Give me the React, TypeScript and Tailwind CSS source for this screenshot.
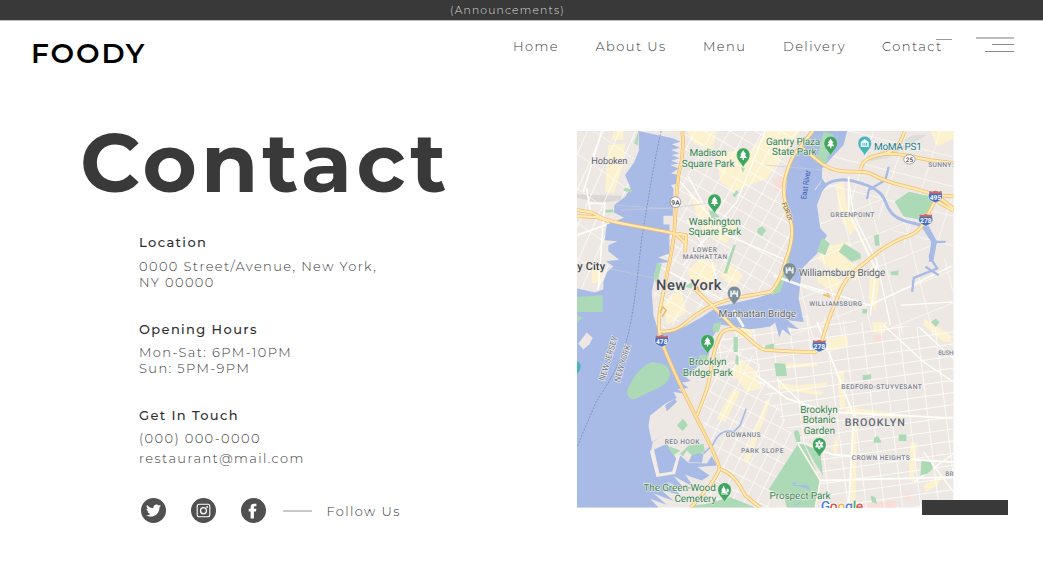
import React from 'react';
import { FaTwitter } from 'react-icons/fa';

/* Parallel street lines through a point, spread along the normal. */
function grid(cx: number, cy: number, angle: number, gap: number, count: number, length: number) {
  const a = (angle * Math.PI) / 180;
  const dx = Math.cos(a) * length;
  const dy = Math.sin(a) * length;
  let d = '';
  for (let i = -count; i <= count; i++) {
    const x = cx - Math.sin(a) * gap * i;
    const y = cy + Math.cos(a) * gap * i;
    d += `M${(x - dx).toFixed(1)} ${(y - dy).toFixed(1)}L${(x + dx).toFixed(1)} ${(y + dy).toFixed(1)}`;
  }
  return d;
}

const highways = [
  'M336 18C342 60 338 100 325 150C318 210 316 270 312 325C306 380 292 440 282 490C272 540 262 580 268 625L275 650C300 720 340 800 378 875C405 930 440 990 448 1030C440 1060 400 1105 362 1146',
  'M21 255L65 262C85 275 110 288 150 294L315 325L348 330L345 382',
  'M21 273L80 276L115 288',
  'M315 325L350 358',
  'M270 618C300 622 330 610 350 590C390 555 430 535 480 522C530 512 560 507 600 500C625 480 640 430 648 400C660 370 668 330 664 300C655 260 640 230 640 190C645 140 665 90 690 65L728 18',
  'M375 492L420 535L490 606C530 625 555 668 585 674L660 678L735 681C755 665 760 620 780 570C805 510 815 470 850 440C900 400 940 360 1000 337C1050 325 1060 295 1075 262L1098 220',
  'M380 870C400 820 418 780 420 740C428 700 435 650 455 622C470 610 490 608 510 615',
  'M690 65C730 90 750 125 800 136C850 145 880 132 910 150C960 180 1010 180 1094 210L1149 214',
  'M870 133C880 95 910 95 945 85C1000 65 990 35 1005 18',
  'M945 87C1000 80 1030 105 1149 113',
  'M1094 225L1149 257M1110 220L1149 250',
  'M452 1032C490 1045 510 1080 525 1110L570 1146',
];

function Label({ x, y, w, s = 30, c = '#69707d', wt = 400, children, t, halo = '#f4f1ed' }: {
  x: number; y: number; w: number; s?: number; c?: string; wt?: number; children: string; t?: string; halo?: string;
}) {
  return (
    <text x={x} y={y} fontSize={s} fill={c} fontWeight={wt} textLength={w} lengthAdjust="spacing" transform={t}
      stroke={halo} strokeWidth={3.5} strokeLinejoin="round" paintOrder="stroke">
      {children}
    </text>
  );
}

function Pin({ x, y, c = '#3fa660', kind = 'tree' }: { x: number; y: number; c?: string; kind?: string }) {
  return (
    <g transform={`translate(${x} ${y})`}>
      <path d="M0 33C-4 20 -20 13 -20 -5A20 20 0 0 1 20 -5C20 13 4 20 0 33Z" fill={c} stroke="#fff" strokeOpacity=".55" strokeWidth="1.5" />
      {kind === 'tree' && <path d="M0 -18L9 -5H5L11 5H2V11H-2V5H-11L-5 -5H-9Z" fill="#fff" />}
      {kind === 'grove' && <path d="M-3 -16L5 -1H2L7 6H-11L-7 -1H-10ZM7 -7A5 5 0 0 1 10 3H8V8H11V10H-10V8H5V3Z" fill="#fff" />}
      {kind === 'bridge' && <path d="M-12 -12H-8C-7 -5 -5 -4 -4 -4V-12H0H4V-4C6 -4 8 -7 8 -12H12V7H6V1C3 -2 -3 -2 -6 1V7H-12Z" fill="#e8edf0" />}
      {kind === 'museum' && <path d="M-12 -8L0 -17L12 -8V7H-12ZM-7 -5V3H-4V-5ZM4 -5V3H7V-5ZM-1 -5V3H2V-5Z" fill="#e8ffff" fillRule="evenodd" />}
      {kind === 'flower' && [0, 60, 120, 180, 240, 300].map((r) => (
        <ellipse key={r} cx="0" cy="-8" rx="3.6" ry="5.5" fill="#fff" transform={`translate(0 -4) rotate(${r})`} />
      ))}
    </g>
  );
}

function Shield({ x, y, n }: { x: number; y: number; n: string }) {
  return (
    <g transform={`translate(${x} ${y})`}>
      <path d="M-19 -17L-10 -15L0 -18L10 -15L19 -17C17 -11 22 -8 21 0C20 12 8 14 0 18C-8 14 -20 12 -21 0C-22 -8 -17 -11 -19 -17Z" fill="#4870b8" stroke="#fff" strokeWidth="1.5" />
      <path d="M-19 -17L-10 -15L0 -18L10 -15L19 -17L18 -10H-18Z" fill="#d9675f" />
      <text x="0" y="9" textAnchor="middle" fontSize="20" fontWeight="700" fill="#fff">{n}</text>
    </g>
  );
}

function CityMap() {
  const g = '#348550';
  const area = '#7a8193';
  return (
    <svg viewBox="21 18 1128 1128" className="block h-[376.5px] w-[376.5px] font-['Roboto',sans-serif] [text-rendering:geometricPrecision]">
      <defs>
        <clipPath id="jersey"><path d="M21 18H205L190 115L182 200L130 260L104 345L116 440L100 495H21Z" /></clipPath>
        <clipPath id="manhattan"><path d="M330 18H740L675 75L645 150L663 310L620 505L400 545L270 620L250 500L310 300Z" /></clipPath>
        <clipPath id="north"><path d="M820 18H1149V420H1060L960 310L755 180Z" /></clipPath>
        <clipPath id="williams"><path d="M755 180L900 170L1060 330L1149 430V640L900 620L660 670L695 430Z" /></clipPath>
        <clipPath id="brooklyn"><path d="M470 620L700 570L960 600L1149 610V1146H780L680 950L560 770L430 690Z" /></clipPath>
        <clipPath id="slope"><path d="M450 620L560 700L680 960L600 1100V1146H370L460 1030L390 870Z" /></clipPath>
      </defs>

      <rect x="21" y="18" width="1128" height="1128" fill="#ede8e3" />

      <g fill="#fdf2cf">
        <path d="M115 60L165 55L160 120L130 205L105 200Z" />
        <path d="M65 430H95V470L65 475ZM130 18H160V45H125Z" />
        <path d="M350 18H440L425 80L370 55ZM440 90L520 70L500 130L590 18H690L590 160L490 200L450 170ZM355 200L400 240L440 290L500 300L470 355L400 320ZM395 395L440 420L425 480L370 475L350 440ZM470 410L520 450L490 490L450 450ZM330 490L350 560L290 600L280 530Z" />
        <path d="M800 175L820 170L830 250L860 300L840 330L805 270ZM770 365L840 350L825 400L870 430L840 460L775 430L740 400ZM750 430L820 470L790 500L740 470ZM900 420L930 440L915 560L895 520ZM1080 18H1149V40L1100 65ZM840 435L865 425L875 445L850 470Z" />
        <path d="M470 750L510 700L560 740L570 790L530 800L500 760ZM440 880L490 790L510 800L465 890ZM500 590L560 590L540 640L500 630ZM625 770L760 800L750 810L625 790ZM770 640L830 630L835 660L780 680ZM800 735L820 740L825 850L810 855ZM905 590L950 590L940 625L910 620ZM845 850L860 860L855 1146H840ZM1020 950L1040 955L1030 1070L1015 1060ZM1060 580L1135 625L1145 650L1120 650L1060 600ZM1060 1080L1120 1045L1100 1080L1065 1100ZM520 1000L590 820L600 825L535 1015ZM785 970L805 920L800 1000ZM625 715L740 712V722L650 728ZM645 785L770 770V780L650 797ZM830 845L1000 868V878L820 862Z" />
      </g>
      <g fill="#f9ded7">
        <path d="M610 165L640 150L645 210L615 195ZM913 630H938V650H913ZM885 1135L975 1125V1146H885ZM1003 1100L1018 1100V1125H1003ZM725 975H760V990H725Z" />
      </g>
      <path d="M21 208L158 212V225L90 234L21 218Z" fill="#dad7d5" />
      <path d="M880 112L960 60L1030 30H1070L950 100Z" fill="#e0dcda" />

      <g stroke="#fffefa" fill="none">
        <g clipPath="url(#jersey)" strokeWidth="2.5">
          <path d={grid(90, 150, 114, 44, 5, 600)} />
          <path d={grid(70, 120, 35, 85, 6, 600)} strokeWidth="2" />
          <path d="M50 190L60 255M60 235H105L100 280L85 490M21 330L150 285M95 18L40 200" strokeWidth="5" />
        </g>
        <g clipPath="url(#manhattan)" strokeWidth="2.4">
          <path d={grid(500, 250, 30, 38, 14, 700)} />
          <path d={grid(500, 250, 119, 44, 12, 700)} />
          <path d="M330 170L470 330L660 410M355 155L400 240M340 420L500 230L585 18M350 285L420 395L450 500M280 430L470 530" strokeWidth="4" />
        </g>
        <g clipPath="url(#north)" strokeWidth="2">
          <path d={grid(970, 140, 14, 86, 5, 600)} />
          <path d={grid(970, 140, 108, 95, 5, 600)} />
        </g>
        <g clipPath="url(#williams)" strokeWidth="2">
          <path d={grid(840, 360, 76, 88, 6, 600)} />
          <path d={grid(840, 360, -22, 92, 6, 600)} />
          <path d="M830 135L850 270L920 410L900 570M670 470L900 540L1149 420M920 410L960 600M990 540L1149 530" strokeWidth="4" />
        </g>
        <g clipPath="url(#brooklyn)">
          <path d={grid(900, 800, -8, 36, 16, 700)} strokeWidth="2.6" />
          <path d={grid(900, 800, 83, 54, 11, 700)} strokeWidth="2.4" />
          <path d="M940 600L1060 710L1149 770M1040 600L1149 700M1030 1070L1149 985M1060 980L1149 1100M620 760L720 860" strokeWidth="4" />
          <path d="M560 750L650 820L780 860L1149 878M740 590L850 870L835 1146M750 1065L1149 1055M680 950L790 988L1149 1010" strokeWidth="5.5" />
        </g>
        <g clipPath="url(#slope)" strokeWidth="2.4">
          <path d={grid(540, 860, 27, 46, 12, 600)} />
          <path d={grid(540, 860, 116, 34, 12, 600)} />
        </g>
      </g>

      <path d="M205 18L207 75L192 112L165 150L182 190L165 215L133 240L132 262L162 278L110 298L104 345L142 348L115 360L115 378L147 404L108 408L130 424L112 440L100 470V492L75 502L21 490V1146H265L240 1120L290 1138L250 1104L310 1126L275 1095L330 1108L290 1068L350 1098L310 1052L370 1084L345 1048L395 1065L418 1050L382 1025L440 1020L425 992L410 1014L355 1012L330 990L312 1042L262 1050L243 975L248 950L278 930L245 950L235 902L240 870L285 835L320 818L310 800L345 805L322 792L355 788L335 772L362 767L344 752L368 743L375 730L415 692L425 640L450 598L540 612L600 604L615 592L627 637L636 612L662 632L650 606L685 612L652 585L700 590L685 520L695 430L740 385L770 330L750 310L740 240L755 200L770 180L755 160V130L800 80L820 60L830 18H720L675 75L650 150L645 240L663 310L650 420L620 500L560 518L440 545L400 572L345 604L300 620L265 618L250 570L245 500L262 415L300 410L264 397L298 385V298H280V272H308L310 190L302 180L325 175V150L303 145L325 130L300 120L327 115L303 107L328 100L305 90L328 85L303 75L329 68L305 58L331 50L308 40Z" fill="#a8bae6" />
      <path d="M745 205C765 165 810 160 840 166C880 175 910 185 930 205C950 225 945 250 970 270C1000 295 1030 290 1052 302" fill="none" stroke="#a8bae6" strokeWidth="9" />
      <path d="M890 222L895 195L945 165L955 125M1055 300L1090 350L1078 395L1100 430L1030 458L1025 500M1085 350H1125M1065 425L1105 450" fill="none" stroke="#a8bae6" strokeWidth="7" />
      <path d="M1050 300L1070 295L1100 350L1088 410L1075 410L1082 350Z" fill="#a8bae6" />
      <path d="M400 985L430 955C440 930 460 910 490 920L510 900L528 850" fill="none" stroke="#a8bae6" strokeWidth="5" />
      <path d="M243 975L262 1050L312 1042L325 990" fill="none" stroke="#f4efe6" strokeWidth="8" />
      <path d="M252 972L290 955L318 1000L306 1038L268 1044ZM285 840L315 820L320 830L290 858ZM355 1010L370 980L400 985L395 1012Z" fill="#a8bae6" />
      <path d="M25 655L50 622L68 638L58 657L40 673Z" fill="#ede8e3" />
      <path d="M733 195L752 170" stroke="#d4dcf4" strokeWidth="3" />

      <g fill="#addab6">
        <path d="M171 805C175 770 210 725 240 712C275 710 300 720 299 750C296 785 240 795 205 817Q180 830 171 805Z" />
        <path d="M21 515L98 510V560H21ZM21 570L38 578L21 592ZM165 187L186 195L183 203L160 197ZM107 253H130V262H107ZM205 18L192 55L203 62Z" />
        <path d="M260 415H275L260 480L250 455ZM563 310L575 303L588 315L575 333L560 322ZM487 210L500 195L505 203L493 217ZM415 255L432 260L448 275L425 280ZM460 445L490 357L497 360L470 445ZM345 485L370 465L365 490ZM512 125L525 130L517 142ZM660 330L656 430L630 500L605 510L643 425Z" />
        <path d="M760 18L790 30L765 125L738 105ZM973 230L1015 200L1085 215V255L1055 285L1000 275ZM755 337L778 355L765 390L740 378ZM822 355L870 385L872 400L845 410L805 380ZM911 330L925 327L928 362L914 362ZM960 440L985 436L983 450H962ZM876 551H890V565H876ZM585 660L612 655V673H585Z" />
        <path d="M612 713L645 715L650 752L618 753ZM876 750L902 747V762L878 764ZM985 927H1008V947H985ZM1053 1007L1080 1010L1088 1030L1070 1045L1050 1050ZM1082 590L1095 580L1107 590L1096 605ZM910 940L920 930L932 945V952H910ZM900 1110L915 1115L920 1135L905 1130Z" />
        <path d="M595 1093L683 955L700 955L750 1065L735 1146H650L640 1110ZM702 955L750 980L758 1050L735 1015ZM670 920Q690 900 690 950L678 950Z" />
        <path d="M320 900L338 880L353 898L338 917ZM290 960L330 975L310 990ZM330 985L355 960L400 955L405 980L365 990L350 975L338 993ZM430 595L455 590L445 620L427 620ZM490 635H503V680H490ZM385 688L415 690L410 710L390 705ZM497 690L505 692V720L495 715ZM370 1140L410 1135L480 1115L555 1146H365Z" />
      </g>
      <path d="M664 1075L675 1070L672 1080L710 1080L718 1092M690 1120L710 1115M675 1140L690 1130" fill="#a8bae6" stroke="#a8bae6" strokeWidth="3" />
      <path d="M683 955L750 1065L735 1146M705 955L758 975" fill="none" stroke="#fff8e8" strokeWidth="5" />

      <path d="M135 240L310 252M150 255L312 248L450 230M115 430L260 460M585 120L760 135" fill="none" stroke="#c8cdd8" strokeWidth="2" />
      <path d="M273 18C250 120 235 220 215 340C205 420 200 500 180 600C160 710 110 780 78 830L21 965" fill="none" stroke="#6877a8" strokeWidth="1.8" strokeDasharray="6 4" />
      <path d="M490 555L520 605M610 452L760 505" fill="none" stroke="#f7f7f3" strokeWidth="8" />
      <path d="M835 155V260L900 400L920 440" fill="none" stroke="#fffdf1" strokeWidth="6" />

      <g fill="none" strokeLinejoin="round">
        {highways.map((d) => <path key={d} d={d} stroke="#f2bd6b" strokeWidth="11" />)}
        {highways.map((d) => <path key={d} d={d} stroke="#feeab2" strokeWidth="6.5" />)}
        <path d="M336 18C342 60 338 100 325 150C318 210 316 270 312 325C306 380 292 440 282 490M275 650C300 720 340 800 378 875C405 930 440 990 448 1030" stroke="#f4c477" strokeWidth="1.5" />
        <path d="M270 562L278 545L288 555L276 575" stroke="#f2bd6b" strokeWidth="5" />
        <path d="M368 495L383 485L386 500M758 508L778 515L770 503" stroke="#f2bd6b" strokeWidth="5" />
      </g>

      <circle cx="316" cy="231" r="16" fill="#fff" stroke="#777" strokeWidth="2" />
      <text x="316" y="239" fontSize="20" fontWeight="500" textAnchor="middle" fill="#444">9A</text>
      <ellipse cx="1017" cy="103" rx="17" ry="14" fill="#fff" stroke="#777" strokeWidth="2" />
      <text x="1017" y="110" fontSize="19" fontWeight="500" textAnchor="middle" fill="#444">25</text>
      <Shield x={1095} y={215} n="495" />
      <Shield x={1066} y={285} n="278" />
      <Shield x={747} y={662} n="278" />
      <Shield x={275} y={647} n="478" />

      <Label x={64} y={118} w={108} s={28} c="#5f656e">Hoboken</Label>
      <Label x={358} y={94} w={112} c={g}>Madison</Label>
      <Label x={335} y={126} w={158} c={g}>Square Park</Label>
      <Label x={356} y={299} w={156} c={g}>Washington</Label>
      <Label x={355} y={331} w={158} c={g}>Square Park</Label>
      <Label x={368} y={381} w={72} s={20} c={area} wt={500}>LOWER</Label>
      <Label x={338} y={402} w={133} s={20} c={area} wt={500}>MANHATTAN</Label>
      <Label x={22} y={434} w={83} s={33} c="#42474e" wt={500}>y City</Label>
      <Label x={258} y={495} w={196} s={44} c="#484d55" wt={500}>New York</Label>
      <Label x={445} y={575} w={232} c="#5b6570">Manhattan Bridge</Label>
      <Label x={587} y={59} w={163} c={g}>Gantry Plaza</Label>
      <Label x={605} y={91} w={134} c={g}>State Park</Label>
      <Label x={911} y={74} w={143} c="#218091">MoMA PS1</Label>
      <Label x={1073} y={126} w={76} s={20} c={area} wt={500}>SUNNY:</Label>
      <Label x={780} y={277} w={132} s={20} c={area} wt={500}>GREENPOINT</Label>
      <Label x={685} y={453} w={260} c="#5b6570">Williamsburg Bridge</Label>
      <Label x={717} y={543} w={158} s={20} c={area} wt={500}>WILLIAMSBURG</Label>
      <Label x={0} y={0} w={88} s={23} c="#3c5cae" t="translate(707 224) rotate(-81)" halo="#a8bae6">East River</Label>
      <Label x={0} y={0} w={57} s={20} c="#665841" t="translate(634 235) rotate(68)" halo="#fbe9b8">FDR Dr</Label>
      <Label x={0} y={0} w={138} s={25} c="#737b8e" t="translate(103 768) rotate(-73)">NEW JERSEY</Label>
      <Label x={0} y={0} w={116} s={25} c="#737b8e" t="translate(148 772) rotate(-73)">NEW YORK</Label>
      <Label x={356} y={719} w={113} c={g}>Brooklyn</Label>
      <Label x={338} y={752} w={150} c={g}>Bridge Park</Label>
      <Label x={284} y={956} w={104} s={20} c={area} wt={500}>RED HOOK</Label>
      <Label x={467} y={935} w={104} s={20} c={area} wt={500}>GOWANUS</Label>
      <Label x={512} y={982} w={128} s={20} c={area} wt={500}>PARK SLOPE</Label>
      <Label x={1103} y={688} w={46} s={19} c={area} wt={500}>BUSH</Label>
      <Label x={813} y={791} w={241} s={20} c={area} wt={500}>BEDFORD-STUYVESANT</Label>
      <Label x={823} y={902} w={180} s={32} c="#626a76" wt={500}>BROOKLYN</Label>
      <Label x={844} y={1003} w={174} s={20} c={area} wt={500}>CROWN HEIGHTS</Label>
      <Label x={1124} y={1052} w={25} s={19} c={area} wt={500}>BR</Label>
      <Label x={690} y={862} w={112} c={g}>Brooklyn</Label>
      <Label x={697} y={894} w={99} c={g}>Botanic</Label>
      <Label x={700} y={927} w={94} c={g}>Garden</Label>
      <Label x={220} y={1098} w={217} c={g}>The Green-Wood</Label>
      <Label x={313} y={1130} w={125} c={g}>Cemetery</Label>
      <Label x={598} y={1120} w={183} c={g}>Prospect Park</Label>

      <Pin x={519} y={94} />
      <Pin x={433} y={232} />
      <Pin x={781} y={59} />
      <Pin x={412} y={653} />
      <Pin x={463} y={1097} kind="grove" />
      <Pin x={883} y={59} c="#48b2bd" kind="museum" />
      <Pin x={492} y={508} c="#7c8d98" kind="bridge" />
      <Pin x={658} y={438} c="#7c8d98" kind="bridge" />
      <Pin x={747} y={962} kind="flower" />
      <path d="M21 708Q34 712 31 728Q29 740 21 745Z" fill="#48b2bd" />

      <text x="751" y="1157" fontSize="42" textLength="128" stroke="#fff" strokeWidth="5" paintOrder="stroke" fontWeight="500">
        <tspan fill="#4e7fe0">G</tspan><tspan fill="#dd5548">o</tspan><tspan fill="#edb93e">o</tspan><tspan fill="#4e7fe0">g</tspan><tspan fill="#4ba45e">l</tspan><tspan fill="#dd5548">e</tspan>
      </text>
    </svg>
  );
}

function Social({ children }: { children: React.ReactNode }) {
  return (
    <span className="flex size-[25px] items-center justify-center rounded-full bg-[#505050] text-white">{children}</span>
  );
}

function Block({ title, children }: { title: string; children: React.ReactNode }) {
  return (
    <section className="h-[86.5px]">
      <h2 className="text-[13px] leading-4 font-medium tracking-[1.38px] text-[#2f2f2f]">{title}</h2>
      {children}
    </section>
  );
}

export default function App() {
  return (
    <div className="h-[588px] w-[1043px] overflow-hidden bg-white font-['Montserrat','Inter',sans-serif] text-[#3c3c3c]">
      <div className="h-[21px] border-b border-[#bdbdbd] bg-[#393939] pl-[450px] text-[10.8px] leading-[21px] font-light tracking-[1.18px] text-[#dedede]">
        <span>(Announcements)</span>
      </div>
      <header className="flex h-[110px] items-start pl-[31px]">
        <div className="w-[482px] pt-3.5 text-[28px] leading-9 font-semibold tracking-[1.9px] text-black">FOODY</div>
        <nav className="flex pt-4 text-[13px] leading-[18px] font-light tracking-[1.42px] whitespace-nowrap">
          <a className="w-[82.5px]">Home</a>
          <a className="w-[107.5px]">About Us</a>
          <a className="w-20">Menu</a>
          <a className="w-[99px]">Delivery</a>
          <a className="relative w-[94px]">
            Contact
            <span className="absolute top-0.5 left-[54px] h-px w-4 bg-[#9a9a9a]" />
          </a>
        </nav>
        <div className="mt-4 flex w-[38px] flex-col items-end">
          <span className="h-[2px] w-[38px] bg-[#bdbdbd]" />
          <span className="mt-[5px] h-px w-[22px] bg-[#8a8a8a]" />
          <span className="mt-[6px] h-px w-[29px] bg-[#8a8a8a]" />
        </div>
      </header>

      <main className="flex">
        <div className="w-[577px] pl-20">
          <h1 className="h-[103px] text-[83px] leading-[64px] font-bold tracking-[4px] text-[#393939]">Contact</h1>
          <div className="pl-[59px] text-[13px] leading-4 font-light tracking-[1.39px] whitespace-nowrap">
            <Block title="Location">
              <p className="mt-[7.6px]">0000 Street/Avenue, New York,<br />NY 00000</p>
            </Block>
            <Block title="Opening Hours">
              <p className="mt-[7px]">Mon-Sat: 6PM-10PM<br />Sun: 5PM-9PM</p>
            </Block>
            <Block title="Get In Touch">
              <p className="mt-[7px]">(000) 000-0000</p>
              <p className="mt-[3.5px]">restaurant@mail.com</p>
            </Block>
            <div className="flex h-[34px] items-center gap-[25px] pl-[1.5px]">
              <Social><FaTwitter size={15} /></Social>
              <Social>
                <svg viewBox="0 0 15 15" className="size-[15px]" fill="none" stroke="currentColor">
                  <rect x="1.2" y="1.2" width="12.6" height="12.6" rx="2" strokeWidth="1.1" />
                  <circle cx="7.5" cy="7.7" r="3" strokeWidth="1.3" />
                  <circle cx="11.2" cy="3.9" r=".9" fill="currentColor" stroke="none" />
                </svg>
              </Social>
              <Social>
                <svg viewBox="0 0 10 16" className="h-4 w-2.5" fill="currentColor">
                  <path d="M2.6 15.5V8.6H.7V5.8H2.6V4.1C2.6 1.8 3.8.7 6 .7H8.4V3.3H7C6.2 3.3 5.9 3.7 5.9 4.4V5.8H8.4L8 8.6H5.9V15.5Z" />
                </svg>
              </Social>
              <span className="-ml-2 h-[2px] w-[29px] bg-[#c8c8c8]" />
              <span className="-ml-2.5">Follow Us</span>
            </div>
          </div>
        </div>
        <div className="relative h-[384px] w-[431px]">
          <CityMap />
          <div className="absolute right-0 bottom-0 h-[15px] w-[86px] bg-[#393939]" />
        </div>
      </main>
    </div>
  );
}
